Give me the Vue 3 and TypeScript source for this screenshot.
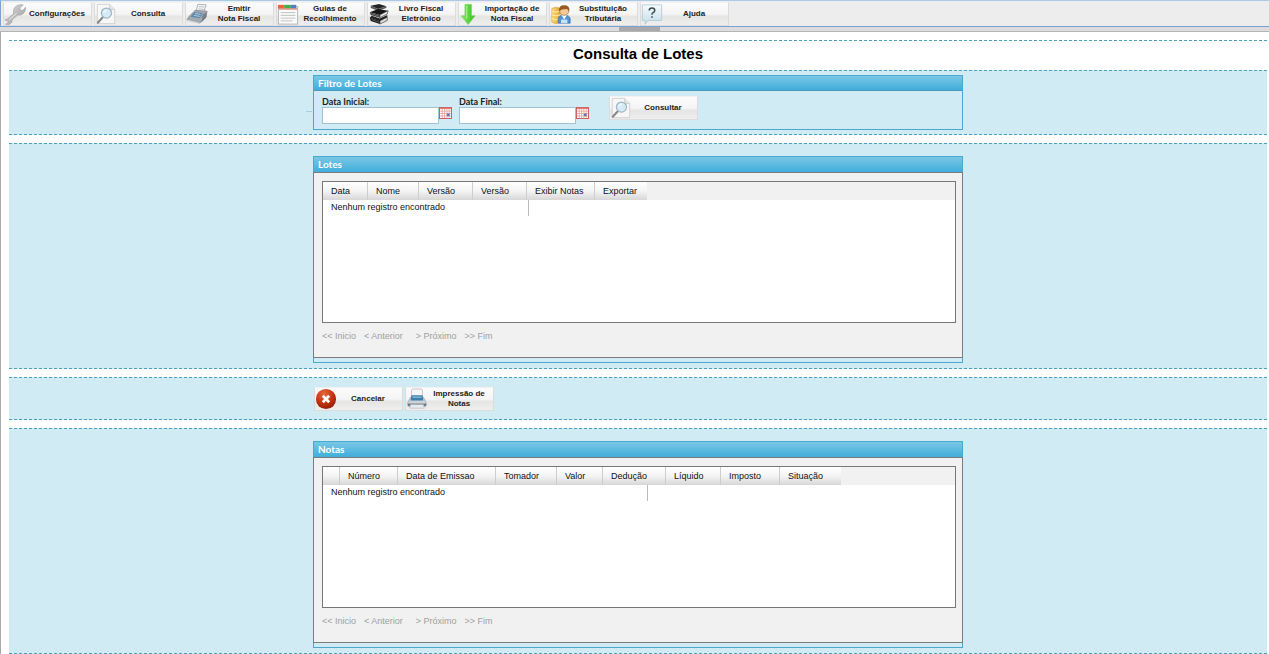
<script setup lang="ts">
import { ref } from 'vue'

interface ToolItem {
  icon: string
  lines: string[]
}
interface Column {
  label: string
  width: number
}
interface Grid {
  title: string
  columns: Column[]
  emptyWidth: number
}

const tools: ToolItem[] = [
  { icon: 'wrench', lines: ['Configurações'] },
  { icon: 'search', lines: ['Consulta'] },
  { icon: 'fax', lines: ['Emitir', 'Nota Fiscal'] },
  { icon: 'form', lines: ['Guias de', 'Recolhimento'] },
  { icon: 'books', lines: ['Livro Fiscal', 'Eletrônico'] },
  { icon: 'down', lines: ['Importação de', 'Nota Fiscal'] },
  { icon: 'person', lines: ['Substituição', 'Tributária'] },
  { icon: 'help', lines: ['Ajuda'] },
]

const lotes: Grid = {
  title: 'Lotes',
  emptyWidth: 206,
  columns: [
    { label: 'Data', width: 45 },
    { label: 'Nome', width: 51 },
    { label: 'Versão', width: 54 },
    { label: 'Versão', width: 54 },
    { label: 'Exibir Notas', width: 68 },
    { label: 'Exportar', width: 52 },
  ],
}

const notas: Grid = {
  title: 'Notas',
  emptyWidth: 325,
  columns: [
    { label: '', width: 17 },
    { label: 'Número', width: 58 },
    { label: 'Data de Emissao', width: 98 },
    { label: 'Tomador', width: 61 },
    { label: 'Valor', width: 46 },
    { label: 'Dedução', width: 63 },
    { label: 'Líquido', width: 55 },
    { label: 'Imposto', width: 59 },
    { label: 'Situação', width: 61 },
  ],
}

const sections = [
  { grid: lotes, actions: true },
  { grid: notas, actions: false },
]

const pager = ['<< Inicio', '< Anterior', '> Próximo', '>> Fim']
const actions: ToolItem[] = [
  { icon: 'cancel', lines: ['Cancelar'] },
  { icon: 'printer', lines: ['Impressão de', 'Notas'] },
]

const dateFields = [
  { id: 'data-inicial', label: 'Data Inicial:', value: ref('') },
  { id: 'data-final', label: 'Data Final:', value: ref('') },
]
</script>

<template>
  <svg class="defs" aria-hidden="true">
    <defs>
      <linearGradient id="metal" x1="0" y1="0" x2="1" y2="1">
        <stop offset="0" stop-color="#dcdcdc" /><stop offset="1" stop-color="#9c9c9c" />
      </linearGradient>
      <linearGradient id="green" x1="0" y1="0" x2="1" y2="0">
        <stop offset="0" stop-color="#8bea62" /><stop offset="1" stop-color="#35bd25" />
      </linearGradient>
      <radialGradient id="red" cx="0.4" cy="0.25" r="0.8">
        <stop offset="0" stop-color="#e8663c" /><stop offset="0.6" stop-color="#c0300f" /><stop offset="1" stop-color="#8c1c06" />
      </radialGradient>
      <linearGradient id="bubble" x1="0" y1="0" x2="0" y2="1">
        <stop offset="0" stop-color="#f6fbfd" /><stop offset="1" stop-color="#c5dde8" />
      </linearGradient>
      <linearGradient id="gold" x1="0" y1="0" x2="1" y2="0">
        <stop offset="0" stop-color="#f8dc84" /><stop offset="1" stop-color="#e2a52b" />
      </linearGradient>
    </defs>
    <symbol id="wrench" viewBox="0 0 24 24">
      <path d="M1 18.500 4.500 17 10.500 11.500Q9.500 6 13.500 3.300 17 1.200 21 2L17 5.400 18 8 21 7.800 23.500 4.500Q23.800 9.500 20.500 12 18 13.600 15 13.200L9 18Q9 22 6 23.300 4 24 1.500 23.200L4.500 21.500 4 19.400Z" fill="url(#metal)" stroke="#a2a2a2" stroke-width="0.700" />
      <path d="M13.500 11.500 6 18" stroke="#f2f2f2" />
    </symbol>
    <symbol id="search" viewBox="0 0 24 24">
      <path d="M2.500 1.500H16L21.500 7V22.500H2.500Z" fill="#f7f7f7" stroke="#cfcfcf" />
      <path d="M16 1.500V7H21.500" fill="#e6e6e6" stroke="#cfcfcf" />
      <path d="m9 15-6 6.500" stroke="#858585" stroke-width="2.200" stroke-linecap="round" />
      <circle cx="12.500" cy="11" r="5.500" fill="#d6ebf8" stroke="#a3b6c2" stroke-width="1.400" />
      <path d="M9.500 10.500Q10 8 12.500 8" fill="none" stroke="#fff" />
    </symbol>
    <symbol id="fax" viewBox="0 0 24 24">
      <path d="m11 9 2-7.500 9 .5-3 9Z" fill="#fbfbfb" stroke="#a5a9ad" />
      <path d="m14 4 6 .4M13.500 6.500l6 .5" stroke="#a8b4bf" />
      <path d="m5 13 5-5 13 1-1 6-7 7L1 18Z" fill="#a2aab1" stroke="#7c8389" stroke-width="0.800" />
      <path d="m9 10 9 1-3 5.500L5 15Z" fill="#5f87aa" />
      <path d="m10 11.500 6 .9M8.500 13.500l6.500 1.100" stroke="#c5dcef" stroke-width="0.900" />
      <path d="m18 13 4-3v6l-5 5Z" fill="#777f86" />
      <path d="m1 18 14 3.500v1.500L1 20Z" fill="#d3d7da" />
    </symbol>
    <symbol id="form" viewBox="0 0 24 24">
      <rect x="1.500" y="4" width="21" height="19" fill="#fafafa" stroke="#b2b2b2" />
      <path d="M1 2h7v4H1Z" fill="#ec6437" /><path d="M8 2h7v4H8Z" fill="#3faf4b" /><path d="M15 2h6v4h-6Z" fill="#4b82bd" />
      <path d="M2 6.500H22" stroke="#db8470" stroke-width="1.500" />
      <path d="M4 10.500H20M4 13.500H20M4 16.500H20M4 19.500H17" stroke="#b9bebb" />
    </symbol>
    <symbol id="books" viewBox="0 0 24 24">
      <path d="m3 3 9-2 8 2.500-9 3Z" fill="#242424" /><path d="m3 3 8 3.500v2L3 5.500Zm8 3.500 9-3v2l-9 3Z" fill="#555" />
      <path d="m2 10 9-3.500 11 2-9 4.500Z" fill="#161616" /><path d="m2 10 11 3v3L3 13Z" fill="#3a3a3a" /><path d="m13 13 9-4.500-1 3.500-8 4Z" fill="#eee" stroke="#333" stroke-width="0.700" />
      <path d="m2 16 2-2 9 3 8-4v2.500L13 20Z" fill="#222" /><path d="m2 16 11 3.500V23L3 19.500Z" fill="#161616" /><path d="m13 19.500 8-4V19l-8 4Z" fill="#ddd" stroke="#333" stroke-width="0.700" />
      <path d="M4 11.800 12 14.500M4 18l8 3M14 15.200 20.500 12" stroke="#999" stroke-width="0.600" />
    </symbol>
    <symbol id="down" viewBox="0 0 24 24">
      <path d="M6.500 1.500h7V14h4L10 23.500 2.500 14h4Z" fill="url(#green)" stroke="#67d34e" stroke-width="0.700" />
      <path d="M8.500 3v14" stroke="#b8f4a0" />
    </symbol>
    <symbol id="person" viewBox="0 0 24 24">
      <path d="M2 6q4.500-3 9 0v15q-4.500 3-9 0Z" fill="url(#gold)" stroke="#d9a23b" stroke-width="0.700" />
      <path d="M2 9q4.500 2 9 0M2 13q4.500 2 9 0M2 17q4.500 2 9 0" fill="none" stroke="#fff0b5" />
      <path d="M9 22v-5q1-4 6.500-4t6.500 4v5Z" fill="#4e93d2" stroke="#2d69a5" stroke-width="0.700" />
      <path d="m12.500 13 3 5 3-5Z" fill="#fff" />
      <circle cx="15.500" cy="8.500" r="5" fill="#f5c996" stroke="#a5672b" stroke-width="0.700" />
      <path d="M10 9Q9 2.500 15.500 2.500T21 9L18.500 6.500 13 7Z" fill="#965a23" />
      <rect x="12" y="18" width="7" height="4" fill="#c9e0f4" />
    </symbol>
    <symbol id="help" viewBox="0 0 24 24">
      <path d="M1.500 2h21v17H8l-3.500 4v-4h-3Z" fill="url(#bubble)" stroke="#b7cad4" />
      <path d="M9 8.200Q9 5.500 12 5.500t3 2.700q0 1.500-1.800 2.300-1.200.600-1.200 2.300M12 14.500v1.700" fill="none" stroke="#3f4b55" stroke-width="1.700" />
    </symbol>
    <symbol id="cancel" viewBox="0 0 24 24">
      <circle cx="12" cy="12" r="11" fill="url(#red)" />
      <path d="m8.500 8.500 7 7m0-7-7 7" stroke="#fff" stroke-width="3" />
    </symbol>
    <symbol id="printer" viewBox="0 0 24 24">
      <path d="M6 12V3q0-2 2-2h8q2 0 2 2v9Z" fill="#f2f6fa" stroke="#c9adad" stroke-width="0.800" />
      <path d="m2 16 3-6h14l3 6v3H2Z" fill="#cbd2d8" stroke="#98a1a8" stroke-width="0.800" />
      <path d="m6 8-1 5.500h14L18 8Z" fill="#3f7eaa" /><path d="M7 10h10" stroke="#85bddd" stroke-width="1.500" />
      <path d="M2 17h20v3H2Z" fill="#717980" /><path d="M5 18h14l1 4H4Z" fill="#e6ebef" stroke="#a4adb4" stroke-width="0.600" />
    </symbol>
    <symbol id="calendar" viewBox="0 0 14 13">
      <rect x="0.500" y="0.500" width="13" height="12" fill="#fff" stroke="#c65757" />
      <path d="M1 1.500h12" stroke="#df7a70" stroke-width="1.500" />
      <path d="M1 4.500h12M1 7h12M1 9.700h12M3.500 2v10M6 2v10M8.500 2v10M11 2v10" stroke="#e09a94" stroke-width="0.800" />
      <rect x="8.500" y="7" width="3" height="3" fill="#6573bb" />
    </symbol>
  </svg>

  <nav class="toolbar">
    <button v-for="t in tools" :key="t.icon" type="button" class="tool">
      <svg class="icon" aria-hidden="true"><use :href="'#' + t.icon" /></svg>
      <span class="caption"><span v-for="l in t.lines" :key="l">{{ l }}</span></span>
    </button>
  </nav>
  <div class="strip"><span class="handle"></span></div>

  <main class="page">
    <header class="band heading"><h1>Consulta de Lotes</h1></header>

    <section class="band filter">
      <div class="panel filter-panel">
        <h2>Filtro de Lotes</h2>
        <form class="fields" @submit.prevent>
          <div v-for="f in dateFields" :key="f.id" class="field">
            <label :for="f.id">{{ f.label }}</label>
            <div class="entry">
              <input :id="f.id" v-model="f.value.value" type="text" />
              <button type="button" class="pick" :aria-label="f.label">
                <svg aria-hidden="true"><use href="#calendar" /></svg>
              </button>
            </div>
          </div>
          <button type="submit" class="tool consult">
            <svg class="icon" aria-hidden="true"><use href="#search" /></svg>
            <span class="caption"><span>Consultar</span></span>
          </button>
        </form>
      </div>
    </section>

    <template v-for="s in sections" :key="s.grid.title">
      <section class="band listing">
        <div class="panel">
          <h2>{{ s.grid.title }}</h2>
          <div class="body">
            <div class="box">
              <div class="head-fill">
                <table>
                  <colgroup><col v-for="(c, i) in s.grid.columns" :key="i" :style="{ width: c.width + 'px' }" /></colgroup>
                  <thead>
                    <tr><th v-for="(c, i) in s.grid.columns" :key="i" scope="col">{{ c.label }}</th></tr>
                  </thead>
                  <tbody>
                    <tr><td :colspan="s.grid.columns.length"><div class="empty" :style="{ width: s.grid.emptyWidth + 'px' }">Nenhum registro encontrado</div></td></tr>
                  </tbody>
                </table>
              </div>
            </div>
            <nav class="pager"><a v-for="p in pager" :key="p" href="#">{{ p }}</a></nav>
          </div>
        </div>
      </section>
      <section v-if="s.actions" class="band">
        <div class="actions">
          <button v-for="a in actions" :key="a.icon" type="button" class="tool">
            <svg class="icon" aria-hidden="true"><use :href="'#' + a.icon" /></svg>
            <span class="caption"><span v-for="l in a.lines" :key="l">{{ l }}</span></span>
          </button>
        </div>
      </section>
    </template>
  </main>
</template>

<style>
body {
  margin: 0;
  background: #fff;
  overflow: hidden;
  font-family: "Liberation Sans", Arial, sans-serif;
}
</style>

<style scoped>
* { box-sizing: border-box; }
.defs { position: absolute; width: 0; height: 0; }
.toolbar {
  display: flex;
  gap: 2px;
  padding: 1px 2px 0;
  background: #ededed;
  border-top: 1px solid #a9cbe8;
  border-bottom: 1px solid #7ba3cf;
  border-left: 1px solid #7ba3cf;
}
.tool {
  display: flex;
  align-items: center;
  width: 89px;
  height: 24px;
  padding: 0;
  border: 1px solid #dcdcdc;
  border-top-color: #f2f2f2;
  background: linear-gradient(#fbfbfb 0%, #f5f5f5 50%, #e6e5e4 62%, #efefef 100%);
  color: #222;
  font: bold 8px/10px "Liberation Sans", Arial, sans-serif;
}
.icon { flex: none; width: 22px; height: 22px; }
.caption { display: flex; flex: 1; flex-direction: column; align-items: center; padding-right: 3px; white-space: nowrap; }
.strip { display: flex; justify-content: center; height: 5px; background: #dcdcdf; border-bottom: 1px solid #b5b5b5; }
.handle { width: 41px; height: 4px; margin-left: 9px; background: #a9a9ac; }
.page {
  display: flex;
  flex-direction: column;
  gap: 8px;
  padding: 8px 2px 0 8px;
  border-left: 1px solid #aaa;
}
.band {
  border-top: 1px dashed #4d9fbb;
  border-bottom: 1px dashed #4d9fbb;
  background: #d1ebf5;
}
.heading { background: #fff; border-bottom: 0; margin-bottom: -8px; }
h1 { margin: 0; padding: 4px 0 7px; text-align: center; color: #000; font-size: 15px; line-height: 18px; }
.filter { padding: 4px 0; }
.panel { width: 650px; margin: 0 auto; border: 1px solid #4aa7cd; }
h2 {
  margin: 0;
  padding: 0 4px;
  border-bottom: 1px solid #4899bb;
  background: linear-gradient(#79c7e5, #41addb);
  color: #fff;
  font: bold 10px/14px Lato, "Century Gothic", sans-serif;
}
.filter-panel { position: relative; }
.filter-panel::before { content: ""; position: absolute; left: -8px; top: 35px; width: 6px; height: 1px; background: #a9cfdd; }
.fields { display: flex; align-items: flex-start; padding: 5px 8px; }
.field { width: 137px; padding-top: 1px; }
label { display: block; color: #222; font: bold 9px/10px Lato, "Century Gothic", sans-serif; }
.entry { display: flex; align-items: flex-start; }
input { width: 117px; height: 17px; padding: 1px 3px; border: 1px solid #9fc4d5; background: #fff; font: 9px "Liberation Sans", Arial, sans-serif; }
.pick { width: 13px; height: 12px; padding: 0; border: 0; background: none; }
.pick svg { display: block; width: 13px; height: 12px; }
.consult { margin-left: 13px; }
.listing { padding: 12px 0 5px; }
.listing .panel { padding-bottom: 4px; }
.listing h2 { line-height: 15px; border-bottom: 0; }
.body {
  margin: 0 -1px;
  padding: 8px 6px 8px 8px;
  border: 1px solid #7b7b80;
  background: #f1f1f1;
}
.box { height: 142px; border: 1px solid #777; background: #fff; }
.head-fill { background: linear-gradient(#f1f1f1 18px, #fff 18px); }
table { width: min-content; table-layout: fixed; border-collapse: separate; border-spacing: 0; font-size: 9px; color: #111; }
th {
  height: 18px;
  padding: 0 0 0 8px;
  border-right: 1px solid #cdcdcd;
  background: linear-gradient(#fff, #f4f4f4 50%, #d7d7d7);
  font-weight: normal;
  text-align: left;
  white-space: nowrap;
}
th:last-child { border-right: 0; }
td { padding: 0; }
.empty { height: 16px; padding-left: 8px; border-right: 1px solid #bbb; line-height: 15px; }
.pager { display: flex; gap: 8px; padding: 7px 0; font-size: 9px; line-height: 12px; }
.pager a { color: #a0a0a0; text-decoration: none; white-space: nowrap; }
.pager a:nth-child(3) { margin-left: 5px; }
.actions { display: flex; gap: 2px; width: 650px; margin: 0 auto; padding: 9px 1px 8px; }
</style>
